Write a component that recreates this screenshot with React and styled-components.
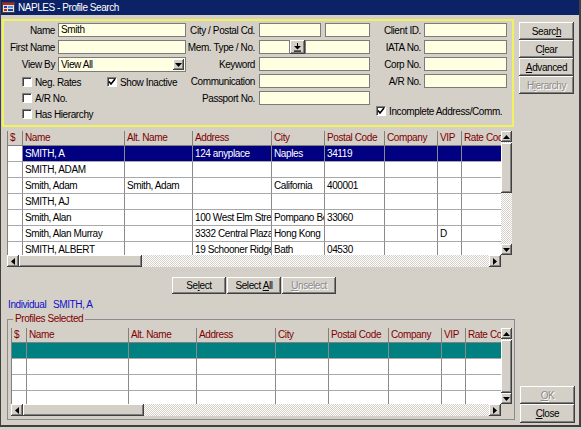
import React from "react";
import styled, { createGlobalStyle, css } from "styled-components";

const FACE = "#d4d0c8";

const GlobalStyle = createGlobalStyle`
  *, *::before, *::after { box-sizing: border-box; }
  html, body { margin: 0; padding: 0; background: ${FACE}; }
  body {
    font-family: "Liberation Sans", Arial, sans-serif;
    font-size: 10px;
    letter-spacing: -0.4px;
    color: #000;
  }
`;

const raised = css`
  background: ${FACE};
  box-shadow: inset -1px -1px 0 #404040, inset 1px 1px 0 #ffffff,
    inset -2px -2px 0 #808080;
`;

const dither = css`
  background: repeating-conic-gradient(#ffffff 0% 25%, ${FACE} 0% 50%) 0 0 / 2px 2px;
`;

const Window = styled.div`
  width: 581px;
  height: 427px;
  display: flex;
  flex-direction: column;
  background: ${FACE};
  border-left: 1px solid #404040;
  border-right: 2px solid #404040;
  border-bottom: 2px solid #404040;
`;

const TitleBar = styled.div`
  height: 15px;
  flex: none;
  background: #0c2266;
  color: #fff;
  display: flex;
  align-items: center;
  gap: 3px;
  padding-left: 1px;
  font-size: 10px;
  letter-spacing: -0.45px;
`;

const Content = styled.div`
  flex: 1;
  display: flex;
  flex-direction: column;
  padding-top: 4px;
`;

const TopRow = styled.div`
  display: flex;
  align-items: flex-start;
`;

const SearchPanel = styled.div`
  margin-left: 1px;
  width: 512px;
  height: 108px;
  border: 2px solid #f2f25e;
  display: flex;
  padding-top: 2px;
`;

const Column = styled.div`
  width: ${(p) => p.$w}px;
  flex: none;
  display: flex;
  flex-direction: column;
  gap: 3px;
`;

const Field = styled.div`
  display: grid;
  grid-template-columns: ${(p) => p.$label}px 1fr;
  column-gap: ${(p) => p.$gap}px;
  height: 14px;
  align-items: center;
`;

const Label = styled.span`
  text-align: right;
  white-space: nowrap;
`;

const InputBox = styled.div`
  height: 14px;
  width: ${(p) => (p.$w ? `${p.$w}px` : "auto")};
  flex: ${(p) => (p.$w ? "none" : "1")};
  background: #ffffe1;
  border: 1px solid #7b7b7b;
  padding: 0 2px;
  line-height: 12px;
  white-space: nowrap;
  overflow: hidden;
`;

const InputPair = styled.div`
  display: flex;
  gap: ${(p) => p.$gap}px;
  height: 14px;
`;

const SelectBox = styled.div`
  height: 15px;
  background: #ffffe1;
  border: 1px solid #7b7b7b;
  display: flex;
  align-items: center;
  justify-content: space-between;
  padding: 0 1px 0 2px;
`;

const SmallButton = styled.div`
  ${raised};
  width: ${(p) => p.$w}px;
  height: ${(p) => p.$h}px;
  flex: none;
  display: flex;
  align-items: center;
  justify-content: center;
`;

const CheckGrid = styled.div`
  display: grid;
  grid-template-columns: 85px auto;
  grid-auto-rows: 16px;
  padding-left: 18px;
`;

const CheckItem = styled.label`
  display: flex;
  align-items: center;
  gap: 3px;
  white-space: nowrap;
  margin-top: ${(p) => (p.$pushDown ? "auto" : "0")};
  margin-bottom: ${(p) => (p.$pushDown ? "6px" : "0")};
  padding-left: ${(p) => p.$indent || 0}px;
  height: 16px;
`;

const CheckBox = styled.span`
  width: 10px;
  height: 10px;
  flex: none;
  background: #fff;
  border-top: 1px solid #808080;
  border-left: 1px solid #808080;
  border-right: 1px solid #ffffff;
  border-bottom: 1px solid #ffffff;
  box-shadow: inset 1px 1px 0 #404040;
  display: flex;
  align-items: center;
  justify-content: center;
`;

const ActionColumn = styled.div`
  display: flex;
  flex-direction: column;
  margin-left: 5px;
  margin-top: ${(p) => p.$top || 0}px;
  width: 55px;
`;

const Button = styled.button`
  ${raised};
  border: none;
  padding: 0;
  margin: 0;
  width: ${(p) => (p.$w ? `${p.$w}px` : "100%")};
  height: ${(p) => p.$h}px;
  font: inherit;
  letter-spacing: inherit;
  text-align: center;
  color: ${(p) => (p.disabled ? "#8a8a8a" : "#000")};
  text-shadow: ${(p) => (p.disabled ? "1px 1px 0 #fff" : "none")};
  u { text-decoration-thickness: 1px; text-underline-offset: 1px; }
`;

const GridFrame = styled.div`
  width: ${(p) => p.$w}px;
  height: ${(p) => p.$h}px;
  display: grid;
  grid-template-columns: 1fr 11px;
  grid-template-rows: 1fr 12px;
  margin-left: ${(p) => p.$left || 0}px;
  margin-top: ${(p) => p.$top || 0}px;
`;

const TableArea = styled.div`
  overflow: hidden;
  background: #fff;
  border-left: 1px solid #808080;
`;

const COLS = "15px 102px 68px 79px 53px 60px 53px 24px 60px";

const HeaderRow = styled.div`
  display: grid;
  grid-template-columns: ${COLS};
  height: 15px;
  background: ${FACE};
`;

const HeaderCell = styled.div`
  border-right: 1px solid #808080;
  border-bottom: 1px solid #808080;
  color: #800000;
  padding-left: 2px;
  line-height: 14px;
  white-space: nowrap;
  overflow: hidden;
`;

const DataRow = styled.div`
  display: grid;
  grid-template-columns: ${COLS};
  height: 16px;
`;

const rowColors = {
  navy: { bg: "#000080", fg: "#fff" },
  teal: { bg: "#008080", fg: "#fff" },
};

const DataCell = styled.div`
  border-right: 1px solid #8a8a8a;
  border-bottom: 1px solid #a8a8a8;
  padding-left: 2px;
  line-height: 15px;
  white-space: nowrap;
  overflow: hidden;
  background: ${(p) => (p.$tone ? rowColors[p.$tone].bg : "#fff")};
  color: ${(p) => (p.$tone ? rowColors[p.$tone].fg : "#000")};
`;

const VScroll = styled.div`
  ${dither};
  display: flex;
  flex-direction: column;
`;

const HScroll = styled.div`
  ${dither};
  display: flex;
`;

const Thumb = styled.div`
  ${raised};
  flex: ${(p) => (p.$fill ? "1" : "none")};
  width: ${(p) => (p.$horizontal ? `${p.$size}px` : "auto")};
  height: ${(p) => (!p.$horizontal && !p.$fill ? `${p.$size}px` : "auto")};
  margin-top: ${(p) => (p.$horizontal ? 0 : 1)}px;
`;

const Spacer = styled.div`
  flex: 1;
`;

const Corner = styled.div`
  background: ${FACE};
`;

const SelectBar = styled.div`
  display: flex;
  gap: 1px;
  margin: 10px 0 0 171px;
`;

const InfoLine = styled.div`
  margin-top: 4px;
  height: 12px;
  padding-left: 7px;
  color: #1010c8;
  display: flex;
  align-items: center;
`;

const InfoKey = styled.span`
  width: 45px;
`;

const BottomRow = styled.div`
  display: flex;
  align-items: flex-end;
  margin: 3px 0 0 6px;
`;

const GroupBox = styled.fieldset`
  width: 508px;
  margin: 0 0 3px 0;
  padding: 3px 2px 3px 3px;
  border: 1px solid #8a8a8a;
  min-width: 0;
`;

const Legend = styled.legend`
  margin-left: 2px;
  padding: 0 2px;
  color: #800000;
  line-height: 12px;
  font-size: 10px;
`;

/* ---------- icons ---------- */

const TitleIcon = () => (
  <svg width="13" height="13" viewBox="0 0 13 13">
    <rect x="0.5" y="1.5" width="12" height="10" fill="#e8e0d0" stroke="#404040" />
    <rect x="1" y="2" width="11" height="2" fill="#c02020" />
    <rect x="2" y="5" width="3" height="2" fill="#2040c0" />
    <rect x="6" y="5" width="5" height="2" fill="#40a0e0" />
    <rect x="2" y="8" width="3" height="2" fill="#c02020" />
    <rect x="6" y="8" width="5" height="2" fill="#2040c0" />
  </svg>
);

const Tri = ({ dir }) => {
  const pts = {
    up: "3.5,0 7,4 0,4",
    down: "0,0 7,0 3.5,4",
    left: "4,0 4,7 0,3.5",
    right: "0,0 4,3.5 0,7",
  }[dir];
  const vertical = dir === "up" || dir === "down";
  return (
    <svg width={vertical ? 7 : 4} height={vertical ? 4 : 7} viewBox={vertical ? "0 0 7 4" : "0 0 4 7"}>
      <polygon points={pts} fill="#000" />
    </svg>
  );
};

const Check = () => (
  <svg width="8" height="8" viewBox="0 0 8 8">
    <polyline points="1,3.5 3,6 7,1" fill="none" stroke="#000" strokeWidth="1.6" />
  </svg>
);

const DownToLine = () => (
  <svg width="9" height="9" viewBox="0 0 9 9">
    <rect x="4" y="0" width="1" height="3" fill="#000" />
    <polygon points="1,3 8,3 4.5,6.5" fill="#000" />
    <rect x="1" y="7.5" width="7" height="1.2" fill="#000" />
  </svg>
);

/* ---------- pieces ---------- */

const Checkbox = ({ label, checked, indent, pushDown }) => (
  <CheckItem $indent={indent} $pushDown={pushDown}>
    <CheckBox>{checked && <Check />}</CheckBox>
    {label}
  </CheckItem>
);

const headers = ["$", "Name", "Alt. Name", "Address", "City", "Postal Code", "Company", "VIP", "Rate Code"];

const resultRows = [
  { cells: ["", "SMITH, A", "", "124 anyplace", "Naples", "34119", "", "", ""], tone: "navy", skipFirst: true },
  { cells: ["", "SMITH, ADAM", "", "", "", "", "", "", ""] },
  { cells: ["", "Smith, Adam", "Smith, Adam", "", "California", "400001", "", "", ""] },
  { cells: ["", "SMITH, AJ", "", "", "", "", "", "", ""] },
  { cells: ["", "Smith, Alan", "", "100 West Elm Street", "Pompano Beach", "33060", "", "", ""] },
  { cells: ["", "Smith, Alan Murray", "", "3332 Central Plaza", "Hong Kong", "", "", "D", ""] },
  { cells: ["", "SMITH, ALBERT", "", "19 Schooner Ridge", "Bath", "04530", "", "", ""] },
];

const emptyCells = ["", "", "", "", "", "", "", "", ""];
const selectedRows = [
  { cells: emptyCells, tone: "teal" },
  { cells: emptyCells },
  { cells: emptyCells },
  { cells: emptyCells },
];

const DataGrid = ({ rows, width, height, left, top, vThumb, hThumb }) => (
  <GridFrame $w={width} $h={height} $left={left} $top={top}>
    <TableArea>
      <HeaderRow>
        {headers.map((h) => (
          <HeaderCell key={h}>{h}</HeaderCell>
        ))}
      </HeaderRow>
      {rows.map((r, i) => (
        <DataRow key={i}>
          {r.cells.map((c, j) => (
            <DataCell key={j} $tone={r.tone && !(r.skipFirst && j === 0) ? r.tone : undefined}>
              {c}
            </DataCell>
          ))}
        </DataRow>
      ))}
    </TableArea>
    <VScroll>
      <SmallButton $w={11} $h={11}>
        <Tri dir="up" />
      </SmallButton>
      {vThumb ? <Thumb $size={vThumb} /> : <Thumb $fill />}
      {vThumb && <Spacer />}
      <SmallButton $w={11} $h={11}>
        <Tri dir="down" />
      </SmallButton>
    </VScroll>
    <HScroll>
      <SmallButton $w={12} $h={12}>
        <Tri dir="left" />
      </SmallButton>
      <Thumb $horizontal $size={hThumb} />
      <Spacer />
      <SmallButton $w={12} $h={12}>
        <Tri dir="right" />
      </SmallButton>
    </HScroll>
    <Corner />
  </GridFrame>
);

export default function App() {
  return (
    <>
      <GlobalStyle />
      <Window>
        <TitleBar>
          <TitleIcon />
          <span>NAPLES - Profile Search</span>
        </TitleBar>
        <Content>
          <TopRow>
            <SearchPanel>
              <Column $w={182}>
                <Field $label={51} $gap={3}>
                  <Label>Name</Label>
                  <InputBox>Smith</InputBox>
                </Field>
                <Field $label={51} $gap={3}>
                  <Label>First Name</Label>
                  <InputBox />
                </Field>
                <Field $label={51} $gap={3}>
                  <Label>View By</Label>
                  <SelectBox>
                    <span>View All</span>
                    <SmallButton $w={11} $h={11}>
                      <Tri dir="down" />
                    </SmallButton>
                  </SelectBox>
                </Field>
                <CheckGrid>
                  <Checkbox label="Neg. Rates" />
                  <Checkbox label="Show Inactive" checked />
                  <Checkbox label="A/R No." />
                  <span />
                  <Checkbox label="Has Hierarchy" />
                </CheckGrid>
              </Column>
              <Column $w={184}>
                <Field $label={69} $gap={4}>
                  <Label>City / Postal Cd.</Label>
                  <InputPair $gap={4}>
                    <InputBox />
                    <InputBox $w={45} />
                  </InputPair>
                </Field>
                <Field $label={69} $gap={4}>
                  <Label>Mem. Type / No.</Label>
                  <InputPair $gap={0}>
                    <InputBox $w={31} />
                    <SmallButton $w={15} $h={14}>
                      <DownToLine />
                    </SmallButton>
                    <InputBox />
                  </InputPair>
                </Field>
                <Field $label={69} $gap={4}>
                  <Label>Keyword</Label>
                  <InputBox />
                </Field>
                <Field $label={69} $gap={4}>
                  <Label>Communication</Label>
                  <InputBox />
                </Field>
                <Field $label={69} $gap={4}>
                  <Label>Passport No.</Label>
                  <InputBox />
                </Field>
              </Column>
              <Column $w={137}>
                <Field $label={51} $gap={3}>
                  <Label>Client ID.</Label>
                  <InputBox />
                </Field>
                <Field $label={51} $gap={3}>
                  <Label>IATA No.</Label>
                  <InputBox />
                </Field>
                <Field $label={51} $gap={3}>
                  <Label>Corp No.</Label>
                  <InputBox />
                </Field>
                <Field $label={51} $gap={3}>
                  <Label>A/R No.</Label>
                  <InputBox />
                </Field>
                <Checkbox label="Incomplete Address/Comm." checked indent={6} pushDown />
              </Column>
            </SearchPanel>
            <ActionColumn $top={3}>
              <Button $h={18}>
                Searc<u>h</u>
              </Button>
              <Button $h={18}>
                C<u>l</u>ear
              </Button>
              <Button $h={18}>
                <u>A</u>dvanced
              </Button>
              <Button $h={18} disabled>
                H<u>i</u>erarchy
              </Button>
            </ActionColumn>
          </TopRow>

          <DataGrid rows={resultRows} width={505} height={136} left={6} top={4} vThumb={50} hThumb={123} />

          <SelectBar>
            <Button $w={54} $h={17}>
              Se<u>l</u>ect
            </Button>
            <Button $w={54} $h={17}>
              Select <u>A</u>ll
            </Button>
            <Button $w={54} $h={17} disabled>
              <u>U</u>nselect
            </Button>
          </SelectBar>

          <InfoLine>
            <InfoKey>Individual</InfoKey>
            <span>SMITH, A</span>
          </InfoLine>

          <BottomRow>
            <GroupBox>
              <Legend>Profiles Selected</Legend>
              <DataGrid rows={selectedRows} width={501} height={88} hThumb={121} />
            </GroupBox>
            <ActionColumn>
              <Button $h={18} disabled>
                <u>O</u>K
              </Button>
              <Button $h={19}>
                <u>C</u>lose
              </Button>
            </ActionColumn>
          </BottomRow>
        </Content>
      </Window>
    </>
  );
}
